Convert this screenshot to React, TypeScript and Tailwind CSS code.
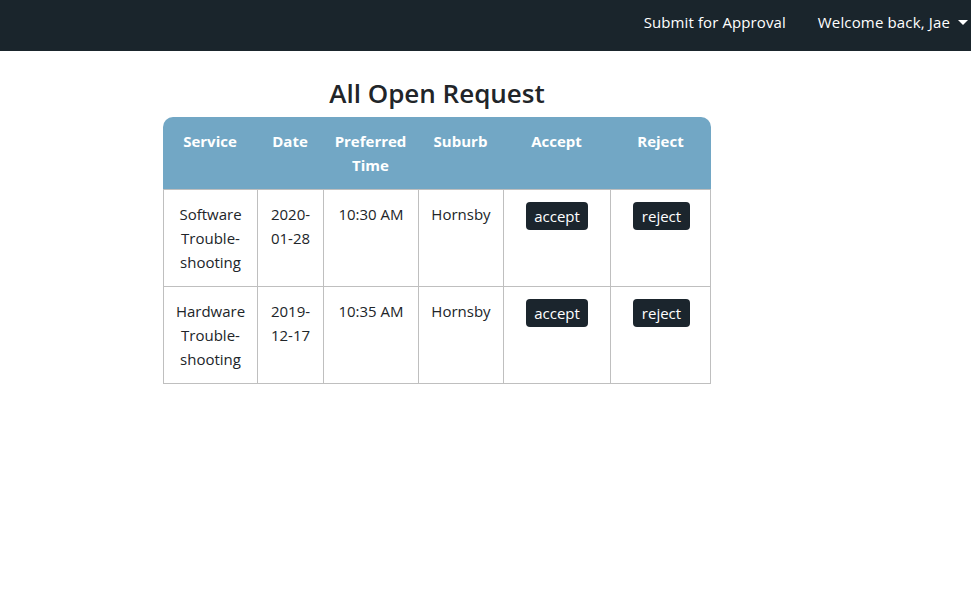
const requests = [
  { service: ['Software', 'Trouble-', 'shooting'], date: ['2020-', '01-28'], time: '10:30 AM', suburb: 'Hornsby' },
  { service: ['Hardware', 'Trouble-', 'shooting'], date: ['2019-', '12-17'], time: '10:35 AM', suburb: 'Hornsby' },
];

export default function App() {
  return (
    <div className="min-h-screen bg-white text-[#212529]" style={{ fontFamily: '"Open Sans", "Noto Sans", sans-serif' }}>
      {/* Navbar */}
      <nav className="h-[51px] bg-[#1a252c] flex items-center justify-end pr-[3px] pb-[6px] text-[15px] text-white">
        <a className="mr-[32px] tracking-[0.1px]">Submit for Approval</a>
        <a className="flex items-center tracking-[0.15px]">
          Welcome back, Jae
          <span className="ml-[8px] w-0 h-0 border-x-[5px] border-x-transparent border-t-[5px] border-t-white" />
        </a>
      </nav>

      <div className="w-[548px] ml-[163px]">
        <h1 className="text-center text-[26px] font-semibold leading-[34px] mt-[25px] mb-[7px]">All Open Request</h1>

        <table className="w-full border-separate border-spacing-0 text-center text-[15px] leading-[24px]">
          <thead>
            <tr className="bg-[#72a7c5] text-white font-bold">
              <th className="w-[94px] h-[73px] align-top pt-[12px] px-2 rounded-tl-[10px] border-b border-[#bfbfbf]">Service</th>
              <th className="w-[66px] align-top pt-[12px] px-2 border-b border-[#bfbfbf]">Date</th>
              <th className="w-[95px] align-top pt-[12px] px-2 border-b border-[#bfbfbf]">Preferred<br />Time</th>
              <th className="w-[85px] align-top pt-[12px] px-2 border-b border-[#bfbfbf]">Suburb</th>
              <th className="w-[107px] align-top pt-[12px] px-2 border-b border-[#bfbfbf]">Accept</th>
              <th className="w-[101px] align-top pt-[12px] px-2 rounded-tr-[10px] border-b border-[#bfbfbf]">Reject</th>
            </tr>
          </thead>
          <tbody>
            {requests.map((r, i) => (
              <tr key={i}>
                <td className="align-top py-[12px] px-1 border-l border-b border-[#bfbfbf]">
                  {r.service.map((s) => <div key={s}>{s}</div>)}
                </td>
                <td className="align-top py-[12px] px-1 border-l border-b border-[#bfbfbf]">
                  {r.date.map((s) => <div key={s}>{s}</div>)}
                </td>
                <td className="align-top py-[12px] px-1 border-l border-b border-[#bfbfbf]">{r.time}</td>
                <td className="align-top py-[12px] px-1 border-l border-b border-[#bfbfbf]">{r.suburb}</td>
                <td className="align-top py-[12px] px-1 border-l border-b border-[#bfbfbf]">
                  <button className="bg-[#1b252d] text-white rounded-[4px] h-[28px] px-[8px] leading-[28px]">accept</button>
                </td>
                <td className="align-top py-[12px] px-1 border-l border-r border-b border-[#bfbfbf]">
                  <button className="bg-[#1b252d] text-white rounded-[4px] h-[28px] px-[9px] leading-[28px] ml-[2px]">reject</button>
                </td>
              </tr>
            ))}
          </tbody>
        </table>
      </div>
    </div>
  );
}
